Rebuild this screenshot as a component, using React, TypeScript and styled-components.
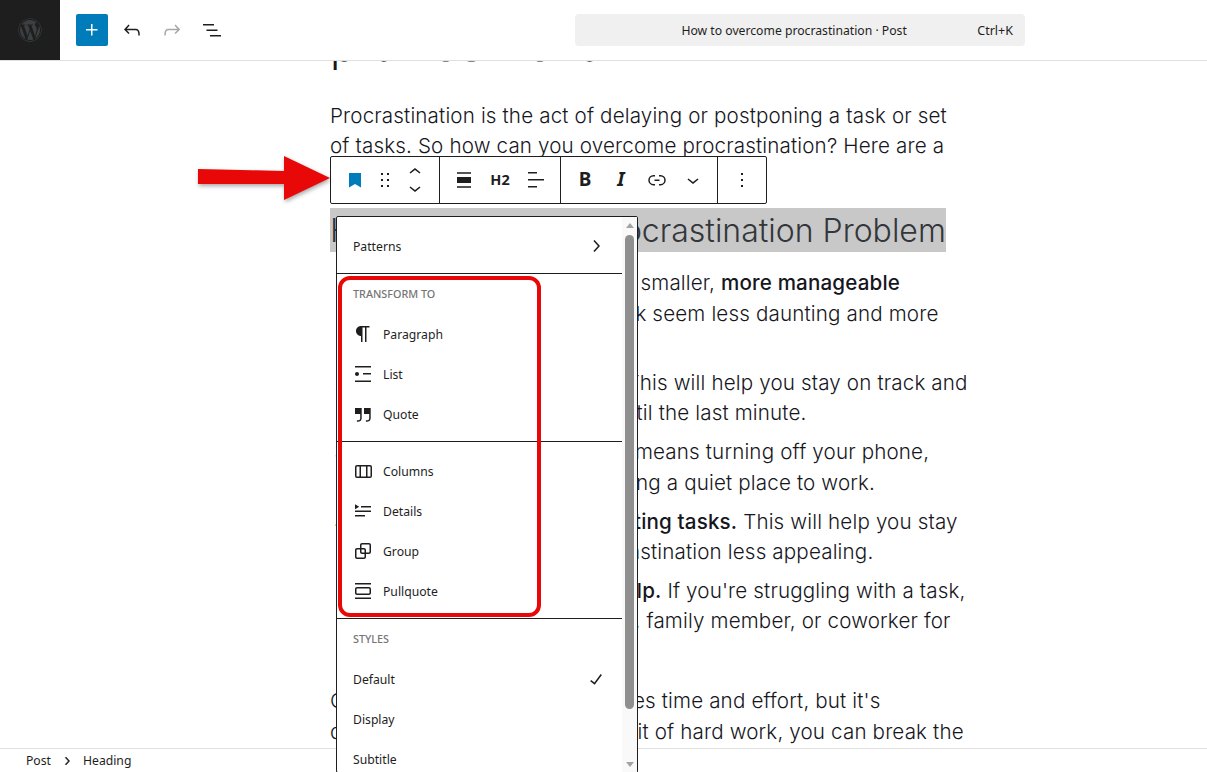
import styled, { createGlobalStyle } from "styled-components";
import { FaWordpress } from "react-icons/fa";

const GlobalStyle = createGlobalStyle`
  html, body {
    margin: 0;
    height: 100%;
    overflow: hidden;
    background: #fff;
  }
  body {
    font-family: "Noto Sans", "Liberation Sans", sans-serif;
    font-size: 13px;
    color: #1e1e1e;
  }
`;

const paths = {
  plus: "M11 12.5V17.5H12.5V12.5H17.5V11H12.5V6H11V11H6V12.5H11Z",
  undo: "M18.3 11.7c-.6-.6-1.4-.9-2.3-.9H6.7l2.9-3.3-1.1-1-4.5 5L8.5 16l1-1-2.7-2.7H16c.5 0 .9.2 1.3.5 1 1 1 3.4 1 4.5v.3h1.5v-.2c0-1.5 0-4.3-1.5-5.7z",
  redo: "M15.6 6.5l-1.1 1 2.9 3.3H8c-.9 0-1.7.3-2.3.9-1.4 1.5-1.4 4.2-1.4 5.6v.2h1.5v-.3c0-1.1 0-3.5 1-4.5.3-.3.7-.5 1.3-.5h9.2L14.5 15l1.1 1.1 4.6-4.6-4.6-5z",
  listView: "M3 6h11v1.5H3V6Zm3.5 5.5h11V13h-11v-1.5ZM21 17H10v1.5h11V17Z",
  bookmark: "M6 5h12v14.5l-6-3.4-6 3.4V5z",
  drag: "M8 7h2V5H8v2zm0 6h2v-2H8v2zm0 6h2v-2H8v2zm6-14v2h2V5h-2zm0 8h2v-2h-2v2zm0 6h2v-2h-2v2z",
  up: "M6.5 12.4L12 8l5.5 4.4-.9 1.2L12 10l-4.5 3.6-1-1.2z",
  down: "M17.5 11.6L12 16l-5.5-4.4.9-1.2L12 14l4.5-3.6 1 1.2z",
  alignNone: "M5 15h14V9H5v6zm0 4.8h14v-1.5H5v1.5zM5 4.2v1.5h14V4.2H5z",
  alignLeft: "M13 5.5H4V4h9v1.5Zm7 7H4V11h16v1.5Zm-7 7H4V18h9v1.5Z",
  link: "M10 17.389H8.444A5.194 5.194 0 1 1 8.444 7H10v1.5H8.444a3.694 3.694 0 0 0 0 7.389H10v1.5ZM14 7h1.556a5.194 5.194 0 0 1 0 10.39H14v-1.5h1.556a3.694 3.694 0 0 0 0-7.39H14V7Zm-4.5 6h5v-1.5h-5V13Z",
  more: "M13 19h-2v-2h2v2zm0-6h-2v-2h2v2zm0-6h-2V5h2v2z",
  right: "M10.6 6L9.4 7l4.6 5-4.6 5 1.2 1 5.4-6z",
  check: "M16.7 7.1l-6.3 8.5-3.3-2.5-.9 1.2 4.5 3.4L17.9 8z",
  paragraph: "m9.99609 14v-.2251l.00391.0001v6.225h1.5v-14.5h2.5v14.5h1.5v-14.5h3v-1.5h-8.50391c-2.76142 0-5 2.23858-5 5 0 2.7614 2.23858 5 5 5z",
  list: "M4 4v1.5h16V4H4zm8 8.5h8V11h-8v1.5zM4 20h16v-1.5H4V20zm4-8c0-1.1-.9-2-2-2s-2 .9-2 2 .9 2 2 2 2-.9 2-2z",
  quote: "M13 6v6h5.2v4c0 .8-.2 1.4-.5 1.7-.6.6-1.6.6-2.5.5h-.3v1.5h.5c1 0 2.3-.1 3.3-1 .6-.6 1-1.6 1-2.8V6H13zm-9 6h5.2v4c0 .8-.2 1.4-.5 1.7-.6.6-1.6.6-2.5.5h-.3v1.5h.5c1 0 2.3-.1 3.3-1 .6-.6 1-1.6 1-2.8V6H4v6z",
  columns: "M15 7.5h-5v10h5v-10Zm1.5 0v10H19a.5.5 0 0 0 .5-.5V8a.5.5 0 0 0-.5-.5h-2.5ZM6 7.5h2.5v10H6a.5.5 0 0 1-.5-.5V8a.5.5 0 0 1 .5-.5ZM6 6h13a2 2 0 0 1 2 2v9a2 2 0 0 1-2 2H6a2 2 0 0 1-2-2V8a2 2 0 0 1 2-2Z",
  details: "M4 16h10v1.5H4V16Zm0-4.5h16V13H4v-1.5ZM10 7h10v1.5H10V7ZM4 5.2 8.2 7.8 4 10.2V5.2Z",
  group: "M18 4h-7c-1.1 0-2 .9-2 2v3H6c-1.1 0-2 .9-2 2v7c0 1.1.9 2 2 2h7c1.1 0 2-.9 2-2v-3h3c1.1 0 2-.9 2-2V6c0-1.1-.9-2-2-2zm-4.5 14c0 .3-.2.5-.5.5H6c-.3 0-.5-.2-.5-.5v-7c0-.3.2-.5.5-.5h3V13c0 1.1.9 2 2 2h2.5v3zm0-4.5H11c-.3 0-.5-.2-.5-.5v-2.5H13c.3 0 .5.2.5.5v2.5zm5-.5c0 .3-.2.5-.5.5h-3V11c0-1.1-.9-2-2-2h-2.5V6c0-.3.2-.5.5-.5h7c.3 0 .5.2.5.5v7z",
  pullquote: "M18 8H6c-1.1 0-2 .9-2 2v4c0 1.1.9 2 2 2h12c1.1 0 2-.9 2-2v-4c0-1.1-.9-2-2-2zm.5 6c0 .3-.2.5-.5.5H6c-.3 0-.5-.2-.5-.5v-4c0-.3.2-.5.5-.5h12c.3 0 .5.2.5.5v4zM4 4v1.5h16V4H4zm0 16h16v-1.5H4V20z",
};

type IconName = keyof typeof paths;

const Svg = styled.svg`
  width: 24px;
  height: 24px;
  flex: none;
  fill: currentColor;
  fill-rule: evenodd;
`;

function Icon({ name }: { name: IconName }) {
  return (
    <Svg viewBox="0 0 24 24" aria-hidden="true">
      <path d={paths[name]} />
    </Svg>
  );
}

const Page = styled.div`
  position: relative;
  width: 100vw;
  height: 100vh;
  overflow: hidden;
  display: flex;
  flex-direction: column;
`;

const TopBar = styled.header`
  height: 60px;
  flex: none;
  display: flex;
  align-items: center;
  padding-right: 182px;
  border-bottom: 1px solid #e0e0e0;
  background: #fff;
  position: relative;
  z-index: 1;
`;

const LogoBox = styled.div`
  width: 60px;
  height: 60px;
  background: #1e1e1e;
  color: #3c4043;
  display: flex;
  align-items: center;
  justify-content: center;
  font-size: 24px;
`;

const AddButton = styled.button`
  width: 32px;
  height: 32px;
  margin: 0 4px 0 16px;
  padding: 0;
  border: 0;
  border-radius: 2px;
  background: #007cba;
  color: #fff;
  display: flex;
  align-items: center;
  justify-content: center;
`;

const TopButton = styled.button<{ $muted?: boolean }>`
  width: 40px;
  height: 32px;
  padding: 0;
  border: 0;
  background: none;
  color: ${(p) => (p.$muted ? "#a7a7a7" : "#1e1e1e")};
  display: flex;
  align-items: center;
  justify-content: center;
`;

const CommandBar = styled.div`
  width: 450px;
  height: 32px;
  box-sizing: border-box;
  margin-left: auto;
  padding: 0 12px 0 36px;
  border-radius: 4px;
  background: #f0f0f0;
  display: flex;
  align-items: center;
`;

const CommandTitle = styled.span`
  flex: 1;
  text-align: center;
  font-size: 12.2px;
`;

const Shortcut = styled.span`
  font-size: 12.5px;
  padding-top: 1px;
`;

const Canvas = styled.main`
  flex: 1;
  min-height: 0;
  overflow: hidden;
  padding-left: 330px;
  font-family: Inter, "Liberation Sans", sans-serif;
  font-size: 20.6px;
  font-weight: 350;
  line-height: 30.4px;
  letter-spacing: 0.15px;
  color: #16161d;
  white-space: nowrap;
`;

const Title = styled.h1`
  margin: -40px 0 32px;
  font-size: 44px;
  line-height: 49px;
  height: 48px;
  font-weight: 350;
  letter-spacing: -0.4px;
`;

const Paragraph = styled.p`
  margin: 0 0 16px;
`;

const SelectedHeading = styled.h2`
  width: 616px;
  height: 44px;
  margin: 0 0 16px;
  background: #c8c8c8;
  color: #33363a;
  font-size: 32px;
  line-height: 45px;
  font-weight: 350;
  letter-spacing: 0;
`;

const Steps = styled.ol`
  margin: 0 0 19px;
  padding: 0 0 0 29px;
`;

const Step = styled.li`
  margin-bottom: 8.5px;
  strong {
    font-weight: 500;
  }
`;

const Footer = styled.footer`
  height: 23px;
  flex: none;
  display: flex;
  align-items: center;
  padding-left: 26px;
  border-top: 1px solid #e0e0e0;
  background: #fff;
  position: relative;
`;

const Crumb = styled.span`
  font-size: 12.2px;
`;

const CrumbArrow = styled.span`
  width: 32px;
  display: flex;
  justify-content: center;
  svg {
    width: 16px;
    height: 16px;
    stroke: currentColor;
    stroke-width: 0.8px;
  }
`;

const BlockToolbar = styled.div`
  position: absolute;
  left: 330px;
  top: 156px;
  height: 48px;
  box-sizing: border-box;
  display: flex;
  background: #fff;
  border: 1px solid #1e1e1e;
  border-radius: 2px;
  z-index: 2;
`;

const ToolGroup = styled.div`
  display: flex;
  align-items: center;
  padding: 0 6px;
  & + & {
    border-left: 1px solid #1e1e1e;
  }
`;

const ToolButton = styled.button<{ $width?: number; $accent?: boolean }>`
  width: ${(p) => p.$width ?? 36}px;
  height: 46px;
  padding: 0;
  border: 0;
  background: none;
  color: ${(p) => (p.$accent ? "#007cba" : "#1e1e1e")};
  display: flex;
  align-items: center;
  justify-content: center;
`;

const TextTool = styled(ToolButton)<{ $italic?: boolean; $size: number }>`
  padding-bottom: 2px;
  font-family: "Noto Sans", sans-serif;
  font-size: ${(p) => p.$size}px;
  font-weight: 700;
  font-style: ${(p) => (p.$italic ? "italic" : "normal")};
`;

const Mover = styled.div`
  width: 36px;
  display: flex;
  flex-direction: column;
  align-items: center;
`;

const MoverArrow = styled.span`
  height: 16px;
  display: flex;
  align-items: center;
  justify-content: center;
`;

const Popover = styled.div`
  position: absolute;
  left: 336px;
  top: 216px;
  width: 302px;
  height: 557px;
  box-sizing: border-box;
  display: flex;
  background: #fff;
  border: 1px solid #1e1e1e;
  border-radius: 2px;
  z-index: 2;
`;

const Menu = styled.div`
  flex: 1;
  min-width: 0;
  overflow: hidden;
`;

const MenuGroup = styled.div`
  padding: 9px 0 7px;
  & + & {
    border-top: 1px solid #1e1e1e;
  }
`;

const GroupLabel = styled.div`
  height: 20px;
  margin-bottom: 11px;
  padding-left: 16px;
  display: flex;
  align-items: center;
  font-size: 10.8px;
  font-weight: 500;
  color: #757575;
  text-transform: uppercase;
`;

const MenuRow = styled.div`
  height: 40px;
  padding: 0 14px 0 16px;
  display: flex;
  align-items: center;
  justify-content: space-between;
  font-size: 12.2px;
`;

const BlockRow = styled.div`
  height: 40px;
  padding-left: 14px;
  display: flex;
  align-items: center;
  gap: 8px;
  font-size: 12.2px;
`;

const ScrollTrack = styled.div`
  width: 15px;
  flex: none;
  background: #f9f9f9;
  display: flex;
  flex-direction: column;
  align-items: center;
`;

const ScrollArrow = styled.span<{ $down?: boolean }>`
  width: 0;
  height: 0;
  flex: none;
  margin: ${(p) => (p.$down ? "auto 0 5px" : "6px 0 7px")};
  border-left: 4.5px solid transparent;
  border-right: 4.5px solid transparent;
  border-${(p) => (p.$down ? "top" : "bottom")}: 5px solid #a3a3a3;
`;

const ScrollThumb = styled.span`
  width: 9px;
  height: 474px;
  flex: none;
  border-radius: 5px;
  background: #8f8f8f;
`;

const ArrowMark = styled.svg`
  position: absolute;
  left: 194px;
  top: 152px;
  width: 142px;
  height: 54px;
  z-index: 3;
  fill: #e80808;
  filter: drop-shadow(1px 2px 2px rgba(0, 0, 0, 0.35));
`;

const Highlight = styled.div`
  position: absolute;
  left: 338px;
  top: 276px;
  width: 203px;
  height: 341px;
  box-sizing: border-box;
  border: 4px solid #e80808;
  border-radius: 12px;
  z-index: 3;
`;

const transforms: { icon: IconName; label: string }[][] = [
  [
    { icon: "paragraph", label: "Paragraph" },
    { icon: "list", label: "List" },
    { icon: "quote", label: "Quote" },
  ],
  [
    { icon: "columns", label: "Columns" },
    { icon: "details", label: "Details" },
    { icon: "group", label: "Group" },
    { icon: "pullquote", label: "Pullquote" },
  ],
];

export default function App() {
  return (
    <Page>
      <GlobalStyle />
      <TopBar>
        <LogoBox>
          <FaWordpress />
        </LogoBox>
        <AddButton>
          <Icon name="plus" />
        </AddButton>
        <TopButton>
          <Icon name="undo" />
        </TopButton>
        <TopButton $muted>
          <Icon name="redo" />
        </TopButton>
        <TopButton>
          <Icon name="listView" />
        </TopButton>
        <CommandBar>
          <CommandTitle>How to overcome procrastination · Post</CommandTitle>
          <Shortcut>Ctrl+K</Shortcut>
        </CommandBar>
      </TopBar>

      <Canvas>
        <Title>procrastination</Title>
        <Paragraph>
          Procrastination is the act of delaying or postponing a task or set
          <br />
          of tasks. So how can you overcome procrastination? Here are a
          <br />
          few tips to get you started:
        </Paragraph>
        <SelectedHeading>How to Solve the Procrastination Problem</SelectedHeading>
        <Steps>
          <Step>
            <strong>Break down large tasks into</strong> smaller, <strong>more manageable</strong>
            <br />
            steps. This can make the task seem less daunting and more
            <br />
            achievable.
          </Step>
          <Step>
            <strong>Set deadlines for yourself.</strong> This will help you stay on track and
            <br />
            avoid putting things away until the last minute.
          </Step>
          <Step>
            <strong>Get rid of distractions.</strong> This means turning off your phone,
            <br />
            shutting other tabs, and finding a quiet place to work.
          </Step>
          <Step>
            <strong>Reward yourself for completing tasks.</strong> This will help you stay
            <br />
            motivated, and makes procrastination less appealing.
          </Step>
          <Step>
            <strong>Don't be afraid to ask for help.</strong> If you're struggling with a task,
            <br />
            don't hesitate to call a friend, family member, or coworker for
            <br />
            assistance.
          </Step>
        </Steps>
        <Paragraph>
          Overcoming procrastination takes time and effort, but it's
          <br />
          definitely possible. With just a bit of hard work, you can break the
        </Paragraph>
      </Canvas>

      <Footer>
        <Crumb>Post</Crumb>
        <CrumbArrow>
          <Icon name="right" />
        </CrumbArrow>
        <Crumb>Heading</Crumb>
      </Footer>

      <BlockToolbar>
        <ToolGroup>
          <ToolButton $accent>
            <Icon name="bookmark" />
          </ToolButton>
          <ToolButton $width={24}>
            <Icon name="drag" />
          </ToolButton>
          <Mover>
            <MoverArrow>
              <Icon name="up" />
            </MoverArrow>
            <MoverArrow>
              <Icon name="down" />
            </MoverArrow>
          </Mover>
        </ToolGroup>
        <ToolGroup>
          <ToolButton>
            <Icon name="alignNone" />
          </ToolButton>
          <TextTool $size={14.5}>H2</TextTool>
          <ToolButton>
            <Icon name="alignLeft" />
          </ToolButton>
        </ToolGroup>
        <ToolGroup>
          <TextTool $size={19}>B</TextTool>
          <TextTool $size={19} $italic>
            I
          </TextTool>
          <ToolButton>
            <Icon name="link" />
          </ToolButton>
          <ToolButton>
            <Icon name="down" />
          </ToolButton>
        </ToolGroup>
        <ToolGroup>
          <ToolButton>
            <Icon name="more" />
          </ToolButton>
        </ToolGroup>
      </BlockToolbar>

      <Popover>
        <Menu>
          <MenuGroup>
            <MenuRow>
              Patterns
              <Icon name="right" />
            </MenuRow>
          </MenuGroup>
          {transforms.map((rows, i) => (
            <MenuGroup key={i}>
              {i === 0 && <GroupLabel>Transform to</GroupLabel>}
              {rows.map((row) => (
                <BlockRow key={row.label}>
                  <Icon name={row.icon} />
                  {row.label}
                </BlockRow>
              ))}
            </MenuGroup>
          ))}
          <MenuGroup>
            <GroupLabel>Styles</GroupLabel>
            <MenuRow>
              Default
              <Icon name="check" />
            </MenuRow>
            <MenuRow>Display</MenuRow>
            <MenuRow>Subtitle</MenuRow>
          </MenuGroup>
        </Menu>
        <ScrollTrack>
          <ScrollArrow />
          <ScrollThumb />
          <ScrollArrow $down />
        </ScrollTrack>
      </Popover>

      <Highlight />
      <ArrowMark viewBox="0 0 142 54" aria-hidden="true">
        <polygon points="4,17 90,19 90,4 136,26 90,48 90,32 4,32" />
      </ArrowMark>
    </Page>
  );
}
